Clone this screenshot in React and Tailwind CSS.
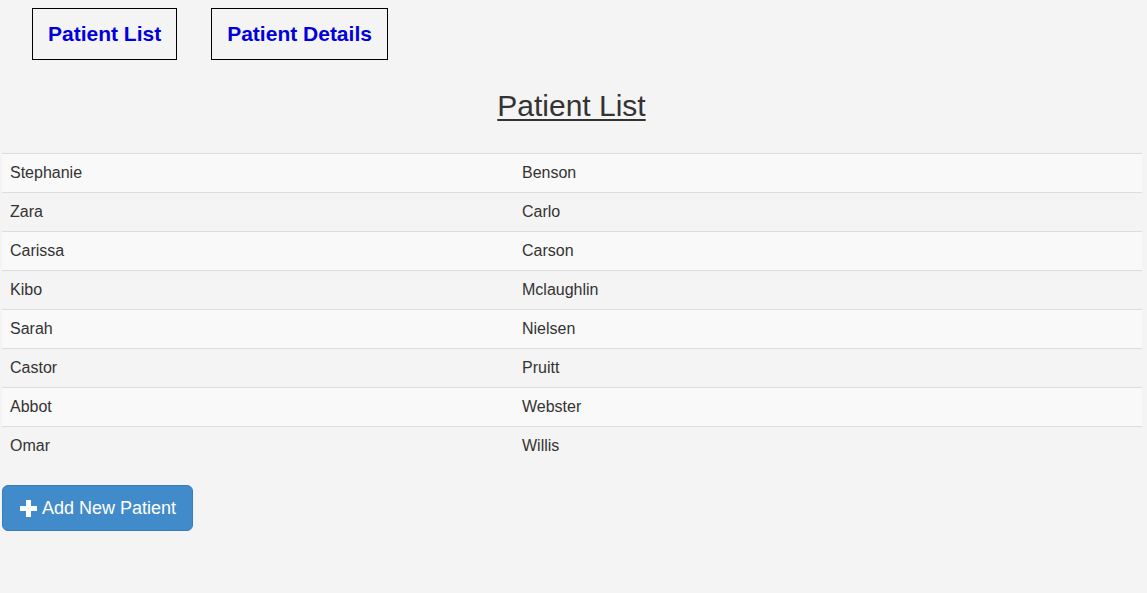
const patients = [
  ["Stephanie", "Benson"],
  ["Zara", "Carlo"],
  ["Carissa", "Carson"],
  ["Kibo", "Mclaughlin"],
  ["Sarah", "Nielsen"],
  ["Castor", "Pruitt"],
  ["Abbot", "Webster"],
  ["Omar", "Willis"],
];

export default function App() {
  return (
    <div className="min-h-[593px] bg-[#f4f4f4] text-[#333] font-['Liberation_Sans',Arial,sans-serif]">
      <nav className="flex gap-[34px] pl-[32px] pt-[8px]">
        <a href="#list" className="h-[52px] flex items-center px-[15px] border border-black text-[21px] font-bold text-[#0000dd]">
          Patient List
        </a>
        <a href="#details" className="h-[52px] flex items-center px-[15px] border border-black text-[21px] font-bold text-[#0000dd]">
          Patient Details
        </a>
      </nav>

      <h2 className="mt-[29px] pr-[4px] text-center text-[30px] leading-[33px] underline underline-offset-[3px] decoration-[2px]">
        Patient List
      </h2>

      <div className="mt-[31px] ml-[2px] w-[1140px] text-[16px]">
        {patients.map(([first, last], i) => (
          <div
            key={first}
            className={
              "grid grid-cols-[512px_1fr] border-t border-[#dddddd] " +
              (i % 2 === 0 ? "bg-[#f9f9f9]" : "bg-[#f4f4f4]")
            }
          >
            <div className="px-[8px] py-[8px] leading-[22px]">{first}</div>
            <div className="px-[8px] py-[8px] leading-[22px]">{last}</div>
          </div>
        ))}
      </div>

      <button className="mt-[20px] ml-[2px] h-[46px] pl-[17px] pr-[16px] flex items-center gap-[5px] rounded-[6px] bg-[#428bca] border border-[#357ebd] text-white text-[18px]">
        <svg width="17" height="17" viewBox="0 0 17 17" fill="white">
          <rect x="6" y="0" width="5" height="17" />
          <rect x="0" y="6" width="17" height="5" />
        </svg>
        Add New Patient
      </button>
    </div>
  );
}
